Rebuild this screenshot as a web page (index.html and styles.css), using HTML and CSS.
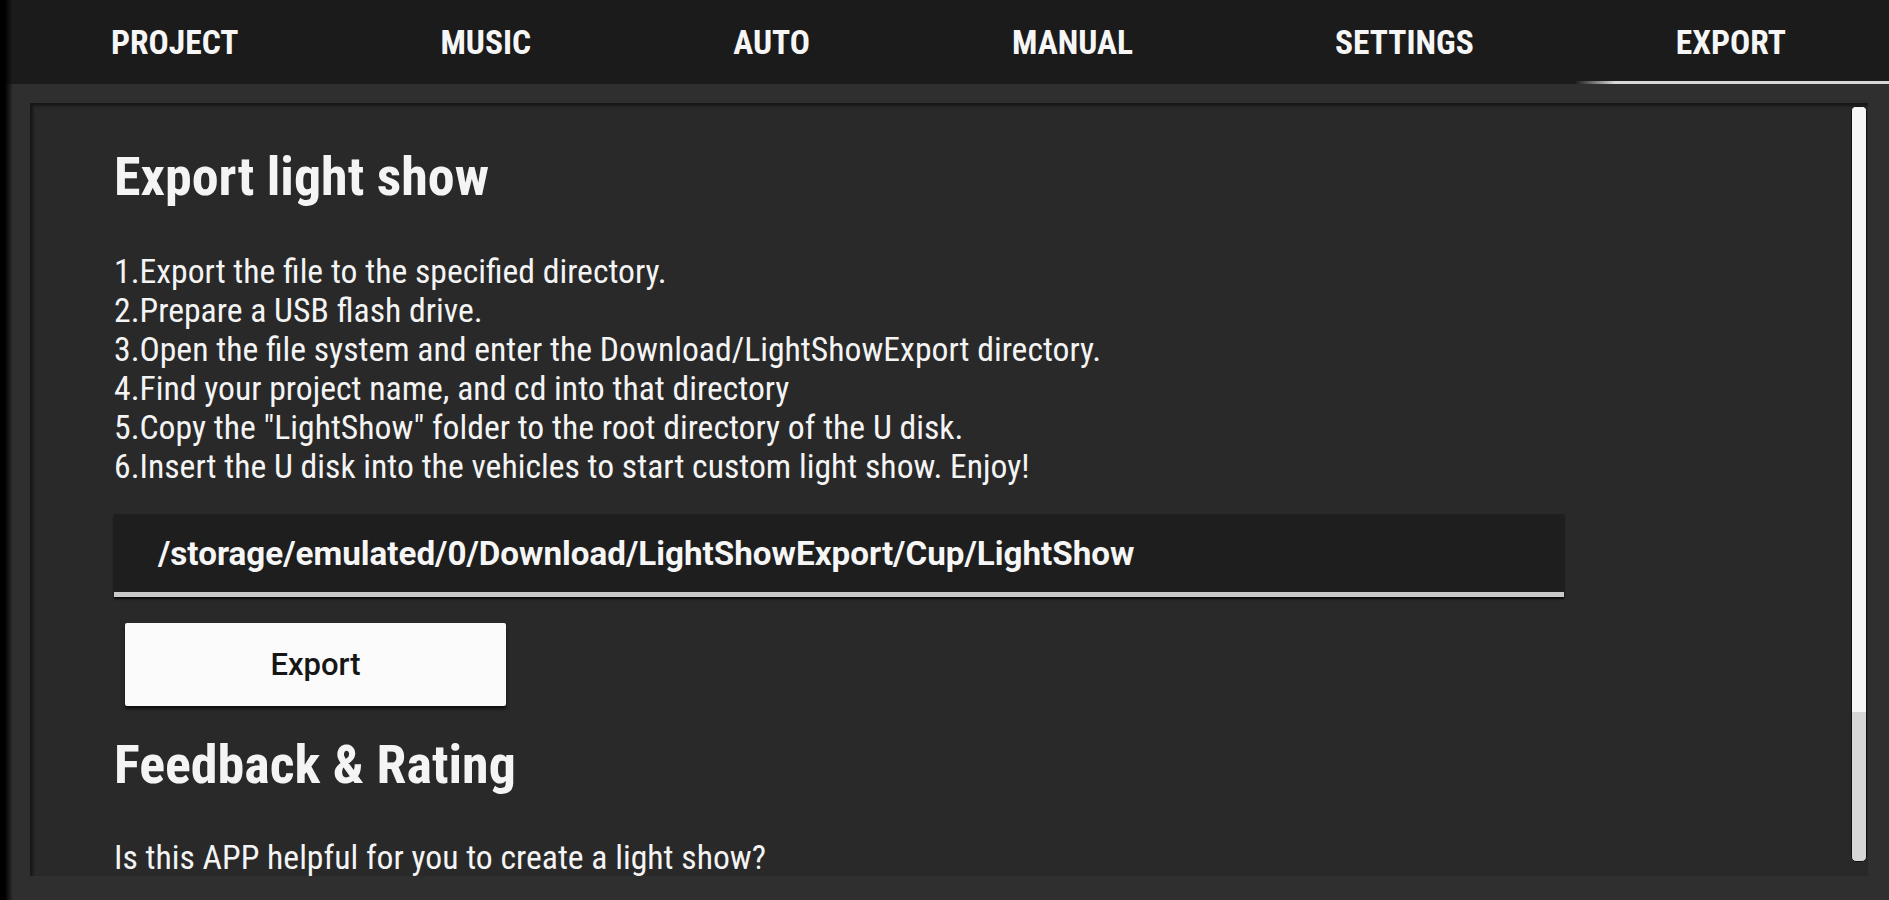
FILE: index.html
```html
<!DOCTYPE html>
<html lang="en">
<head>
<meta charset="utf-8">
<title>Export</title>
<link rel="stylesheet" href="styles.css">
</head>
<body>
<div class="app">
  <nav class="tabs">
    <a class="tab">PROJECT</a>
    <a class="tab">MUSIC</a>
    <a class="tab">AUTO</a>
    <a class="tab">MANUAL</a>
    <a class="tab">SETTINGS</a>
    <a class="tab active">EXPORT</a>
  </nav>
  <main class="frame">
    <section class="panel">
      <div class="content">
        <h1 class="title">Export light show</h1>
        <div class="steps">
          <p>1.Export the file to the specified directory.</p>
          <p>2.Prepare a USB flash drive.</p>
          <p>3.Open the file system and enter the Download/LightShowExport directory.</p>
          <p>4.Find your project name, and cd into that directory</p>
          <p>5.Copy the "LightShow" folder to the root directory of the U disk.</p>
          <p>6.Insert the U disk into the vehicles to start custom light show. Enjoy!</p>
        </div>
        <div class="path-field"><span>/storage/emulated/0/Download/LightShowExport/Cup/LightShow</span></div>
        <button class="export-btn">Export</button>
        <h2 class="title title-2">Feedback &amp; Rating</h2>
        <p class="question">Is this APP helpful for you to create a light show?</p>
      </div>
      <div class="scrollbar"><div class="thumb"></div></div>
    </section>
  </main>
</div>
</body>
</html>
```
FILE: styles.css
```css
html, body {
  margin: 0;
  height: 100%;
}
body {
  background: linear-gradient(90deg, #000 0, #000 5px, #2f2f2f 13px);
  font-family: Roboto, "Liberation Sans", sans-serif;
  color: #f4f4f4;
  overflow: hidden;
}
.app {
  display: flex;
  flex-direction: column;
  height: 900px;
}
.tabs {
  display: flex;
  height: 84px;
  flex: none;
  padding-left: 10px;
  background: linear-gradient(90deg, #000 0, #000 5px, #1b1b1b 12px);
}
.tab {
  display: flex;
  align-items: center;
  padding: 0 101px;
  font-size: 33.5px;
  font-weight: 700;
  font-stretch: 75%;
  color: #f6f6f6;
}
.tab.active {
  flex: 1;
  background: linear-gradient(90deg, rgba(220,220,220,0) 0, #d8d8d8 40px) left bottom / 100% 3px no-repeat;
}
.frame {
  flex: 1;
  display: flex;
  padding: 19px 21px 24px 30px;
  min-height: 0;
}
.panel {
  flex: 1;
  display: flex;
  background: #292929;
  box-shadow: inset 3px 3px 3px rgba(0,0,0,0.45);
  min-height: 0;
}
.content {
  flex: 1;
  padding: 44px 0 0 84px;
  overflow: hidden;
}
.title {
  margin: 0;
  font-size: 54px;
  line-height: 60px;
  font-weight: 700;
  font-stretch: 75%;
}
.steps {
  margin-top: 45px;
}
.steps p, .question {
  margin: 0;
  font-size: 33.7px;
  line-height: 39px;
  font-stretch: 75%;
  white-space: nowrap;
}
.path-field {
  margin-top: 28px;
  width: 1406px;
  height: 78px;
  padding-left: 44px;
  display: flex;
  align-items: center;
  background: #1e1e1e;
  border-bottom: 5px solid #c9c9c9;
  box-shadow: 0 2px 2px rgba(0,0,0,0.8);
  font-size: 33.2px;
  font-weight: 700;
  color: #f6f6f6;
}
.export-btn {
  display: block;
  margin: 26px 0 0 11px;
  width: 381px;
  height: 83px;
  border: none;
  border-radius: 2px;
  background: #fbfbfb;
  box-shadow: 0 3px 3px rgba(0,0,0,0.6);
  font-family: Roboto, "Liberation Sans", sans-serif;
  font-size: 31px;
  font-weight: 500;
  color: #161616;
}
.title-2 {
  margin-top: 29px;
}
.question {
  margin-top: 43px;
}
.scrollbar {
  flex: none;
  width: 14px;
  margin: 3px 1px 14px 0;
  border: 1px solid #111;
  border-radius: 5px;
  background: #d6d6d6;
  overflow: hidden;
}
.thumb {
  height: 605px;
  background: #f6f6f6;
}
```
